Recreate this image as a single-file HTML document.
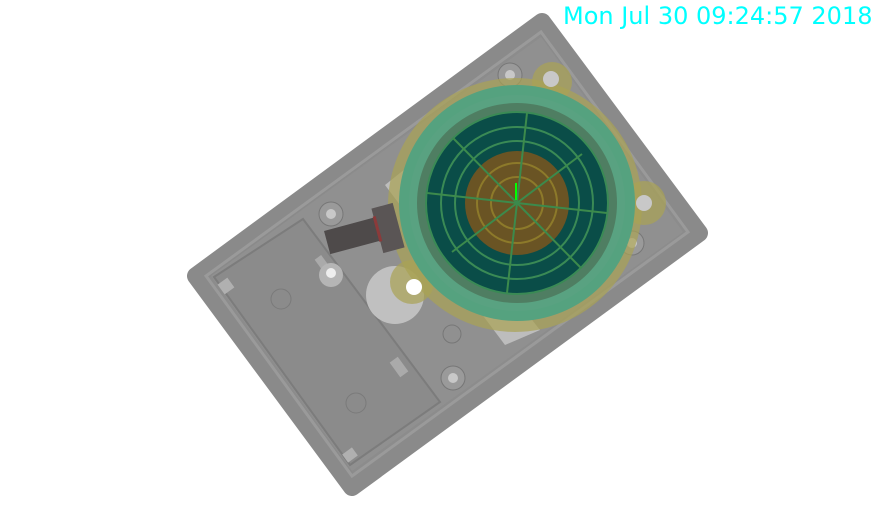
<!DOCTYPE html>
<html><head><meta charset="utf-8"><style>
html,body{margin:0;padding:0;background:#fff;width:894px;height:509px;overflow:hidden}
svg{position:absolute;left:0;top:0}
.t{position:absolute;left:563px;top:2px;font-family:"DejaVu Sans","Liberation Sans",sans-serif;font-size:24px;color:#00ffff;white-space:nowrap}
</style></head><body>
<svg width="894" height="509" viewBox="0 0 894 509">
<polygon points="542,22 699,233 352,487 196,276" fill="#8c8c8c" stroke="#8a8a8a" stroke-width="18" stroke-linejoin="round"/>
<polygon points="541,32 688,232 352,476 206,276" fill="none" stroke="#9a9a9a" stroke-width="3"/>
<polygon points="541,37 683,232 352,471 211,276" fill="#909090"/>
<!-- battery compartment -->
<polygon points="214,277 303,219 440,402 350,465" fill="#8b8b8b" stroke="#7c7c7c" stroke-width="2"/>
<rect x="220" y="280" width="12" height="12" fill="#b0b0b0" transform="rotate(-36 226 286)"/>
<rect x="344" y="450" width="12" height="10" fill="#b0b0b0" transform="rotate(-36 350 455)"/>
<rect x="394" y="358" width="10" height="18" fill="#aaa" transform="rotate(-36 399 367)"/>
<rect x="318" y="256" width="8" height="14" fill="#aaa" transform="rotate(-36 322 263)"/>
<circle cx="331" cy="275" r="12" fill="#b5b5b5"/>
<circle cx="331" cy="273" r="5" fill="#eee"/>
<circle cx="395" cy="295" r="29" fill="#c0c0c0"/>
<circle cx="281" cy="299" r="10" fill="none" stroke="#7a7a7a"/>
<circle cx="356" cy="403" r="10" fill="none" stroke="#7a7a7a"/>
<g fill="#9a9a9a" stroke="#777">
<circle cx="331" cy="214" r="12"/><circle cx="453" cy="378" r="12"/><circle cx="632" cy="243" r="12"/><circle cx="510" cy="75" r="12"/>
</g>
<g fill="#c8c8c8"><circle cx="331" cy="214" r="5"/><circle cx="453" cy="378" r="5"/><circle cx="632" cy="243" r="5"/><circle cx="510" cy="75" r="5"/></g>
<circle cx="452" cy="334" r="9" fill="none" stroke="#777"/>
<polygon points="385,185 410,165 540,330 505,345" fill="#bdbdbd"/>
<g fill="#aaa254" fill-opacity="0.7">
<circle cx="515" cy="205" r="127"/>
<circle cx="552" cy="82" r="20"/>
<circle cx="644" cy="203" r="22"/>
<circle cx="412" cy="282" r="22"/>
</g>
<circle cx="551" cy="79" r="8" fill="#c8c8c8"/>
<circle cx="644" cy="203" r="8" fill="#c8c8c8"/>
<circle cx="414" cy="287" r="8" fill="#fff"/>
<rect x="326" y="222" width="66" height="24" fill="#4e4a4a" transform="rotate(-15 359 234)"/>
<rect x="377" y="205" width="22" height="46" fill="#5a5555" transform="rotate(-15 388 228)"/>
<rect x="376" y="216" width="3" height="26" fill="#8b3a3a" transform="rotate(-15 377 229)"/>
<circle cx="517" cy="203" r="118" fill="#55a27f"/>
<circle cx="517" cy="203" r="108" fill="#5aa282" opacity="0.9"/>
<circle cx="517" cy="203" r="100" fill="#4f7e62"/>
<circle cx="517" cy="203" r="91" fill="#0a4d48"/>
<g fill="none" stroke="#3a8a55" stroke-width="2">
<circle cx="517" cy="203" r="91"/><circle cx="517" cy="203" r="76"/><circle cx="517" cy="203" r="62"/>
</g>
<circle cx="517" cy="203" r="52" fill="#6a5424"/>
<g fill="none" stroke="#8d7a2a" stroke-width="2">
<circle cx="517" cy="203" r="40"/><circle cx="517" cy="203" r="26"/>
</g>
<g stroke="#3c8a4c" stroke-width="2">
<line x1="527" y1="113" x2="507" y2="293"/>
<line x1="427" y1="193" x2="607" y2="213"/>
<line x1="453" y1="138" x2="581" y2="268"/>
<line x1="582" y1="154" x2="452" y2="252"/>
</g>
<line x1="516" y1="183" x2="516" y2="200" stroke="#00ff00" stroke-width="2"/>
</svg>
<div class="t">Mon Jul 30 09:24:57 2018</div>
</body></html>
